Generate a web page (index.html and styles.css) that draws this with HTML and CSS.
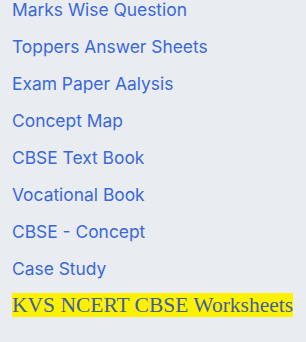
FILE: index.html
```html
<!DOCTYPE html>
<html>
<head>
<meta charset="utf-8">
<link rel="stylesheet" href="styles.css">
</head>
<body>
<ul class="links">
  <li><a href="#">Marks Wise Question</a></li>
  <li><a href="#">Toppers Answer Sheets</a></li>
  <li><a href="#">Exam Paper Aalysis</a></li>
  <li><a href="#">Concept Map</a></li>
  <li><a href="#">CBSE Text Book</a></li>
  <li><a href="#">Vocational Book</a></li>
  <li><a href="#">CBSE - Concept</a></li>
  <li><a href="#">Case Study</a></li>
  <li class="special"><a href="#"><mark>KVS NCERT CBSE Worksheets</mark></a></li>
</ul>
</body>
</html>
```
FILE: styles.css
```css
html, body {
  margin: 0;
  padding: 0;
  background: #e9edf2;
}
.links {
  list-style: none;
  margin: -9px 0 0 0;
  padding: 0 0 0 12px;
  font-family: Inter, "Noto Sans", sans-serif;
  font-size: 17.4px;
}
.links li {
  height: 37px;
  line-height: 37px;
}
.links a {
  color: #3b68d9;
  text-decoration: none;
}
.links .special {
  font-family: "Liberation Serif", serif;
  font-size: 21.5px;
}
.links mark {
  background: #fff200;
  color: #3f5fa5;
}
```
